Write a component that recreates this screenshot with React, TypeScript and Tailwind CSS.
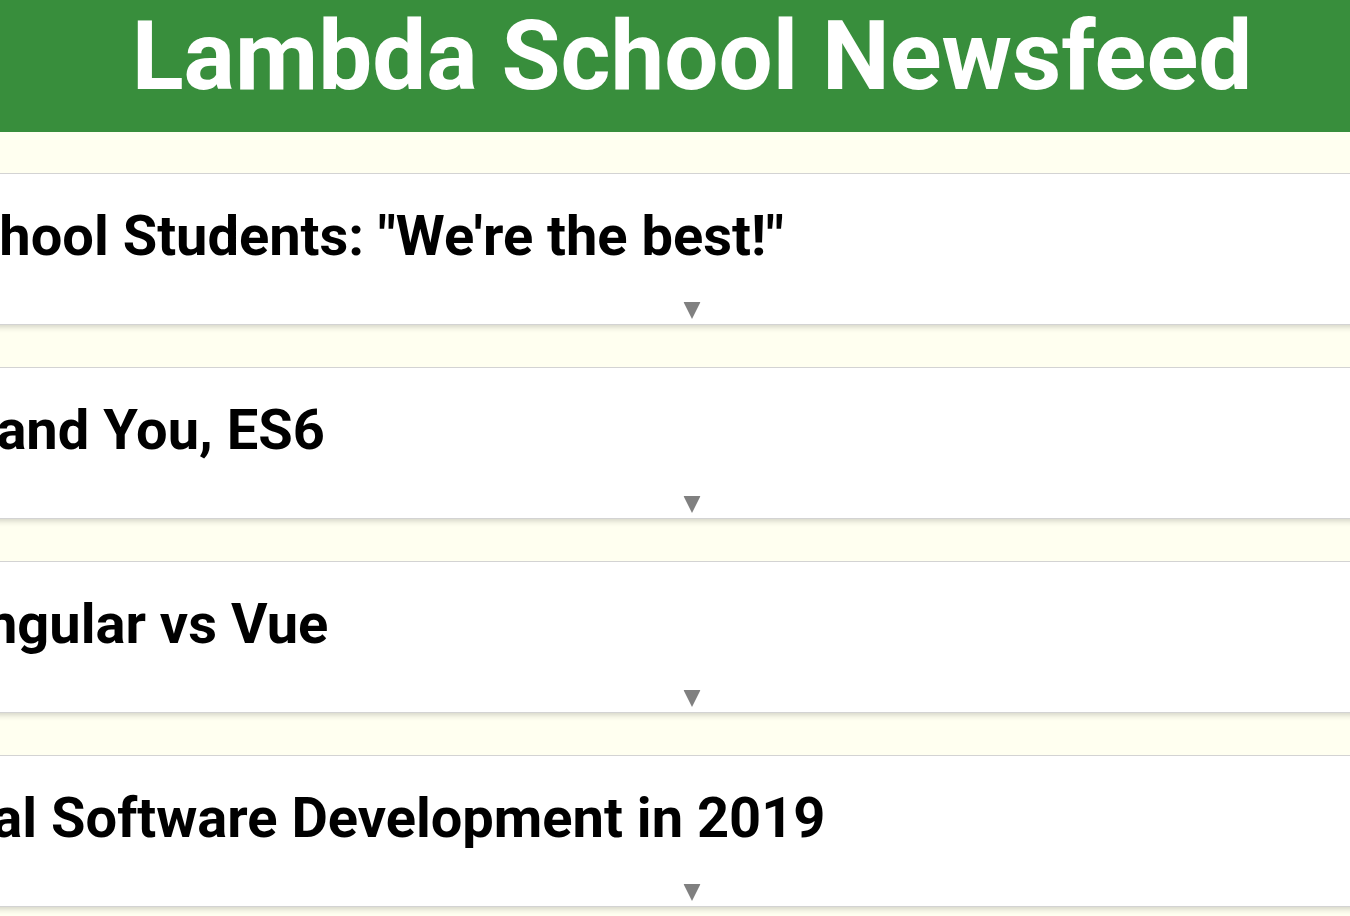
import React from "react";

const titles = [
  "Lambda School Students: \"We're the best!\"",
  "Javascript and You, ES6",
  "React vs Angular vs Vue",
  "Professional Software Development in 2019",
];

export default function App() {
  return (
    <div className="w-[1350px] h-[916px] overflow-hidden bg-[#fffff0] font-['Roboto',sans-serif]">
      <div className="w-[1966px] -ml-[291px]">
        <div className="h-[132px] bg-[#388e3c] overflow-hidden">
          <h1 className="text-center text-white font-bold text-[96px] leading-[112px]">
            Lambda School Newsfeed
          </h1>
        </div>
        <div className="flex flex-col gap-[42px] pt-[41px]">
          {titles.map((t) => (
            <div
              key={t}
              className="relative h-[152px] bg-white border border-[#d3d3d3] shadow-[0_4px_6px_-2px_rgba(0,0,0,0.18)]"
            >
              <h2 className="pl-[10px] pt-[29px] text-black font-bold text-[56px] leading-[66px] whitespace-nowrap">
                {t}
              </h2>
              <svg
                className="absolute left-1/2 -translate-x-1/2 bottom-[5px]"
                width="17"
                height="17"
                viewBox="0 0 17 17"
              >
                <polygon points="0,0 17,0 8.5,17" fill="#808080" />
              </svg>
            </div>
          ))}
        </div>
      </div>
    </div>
  );
}
